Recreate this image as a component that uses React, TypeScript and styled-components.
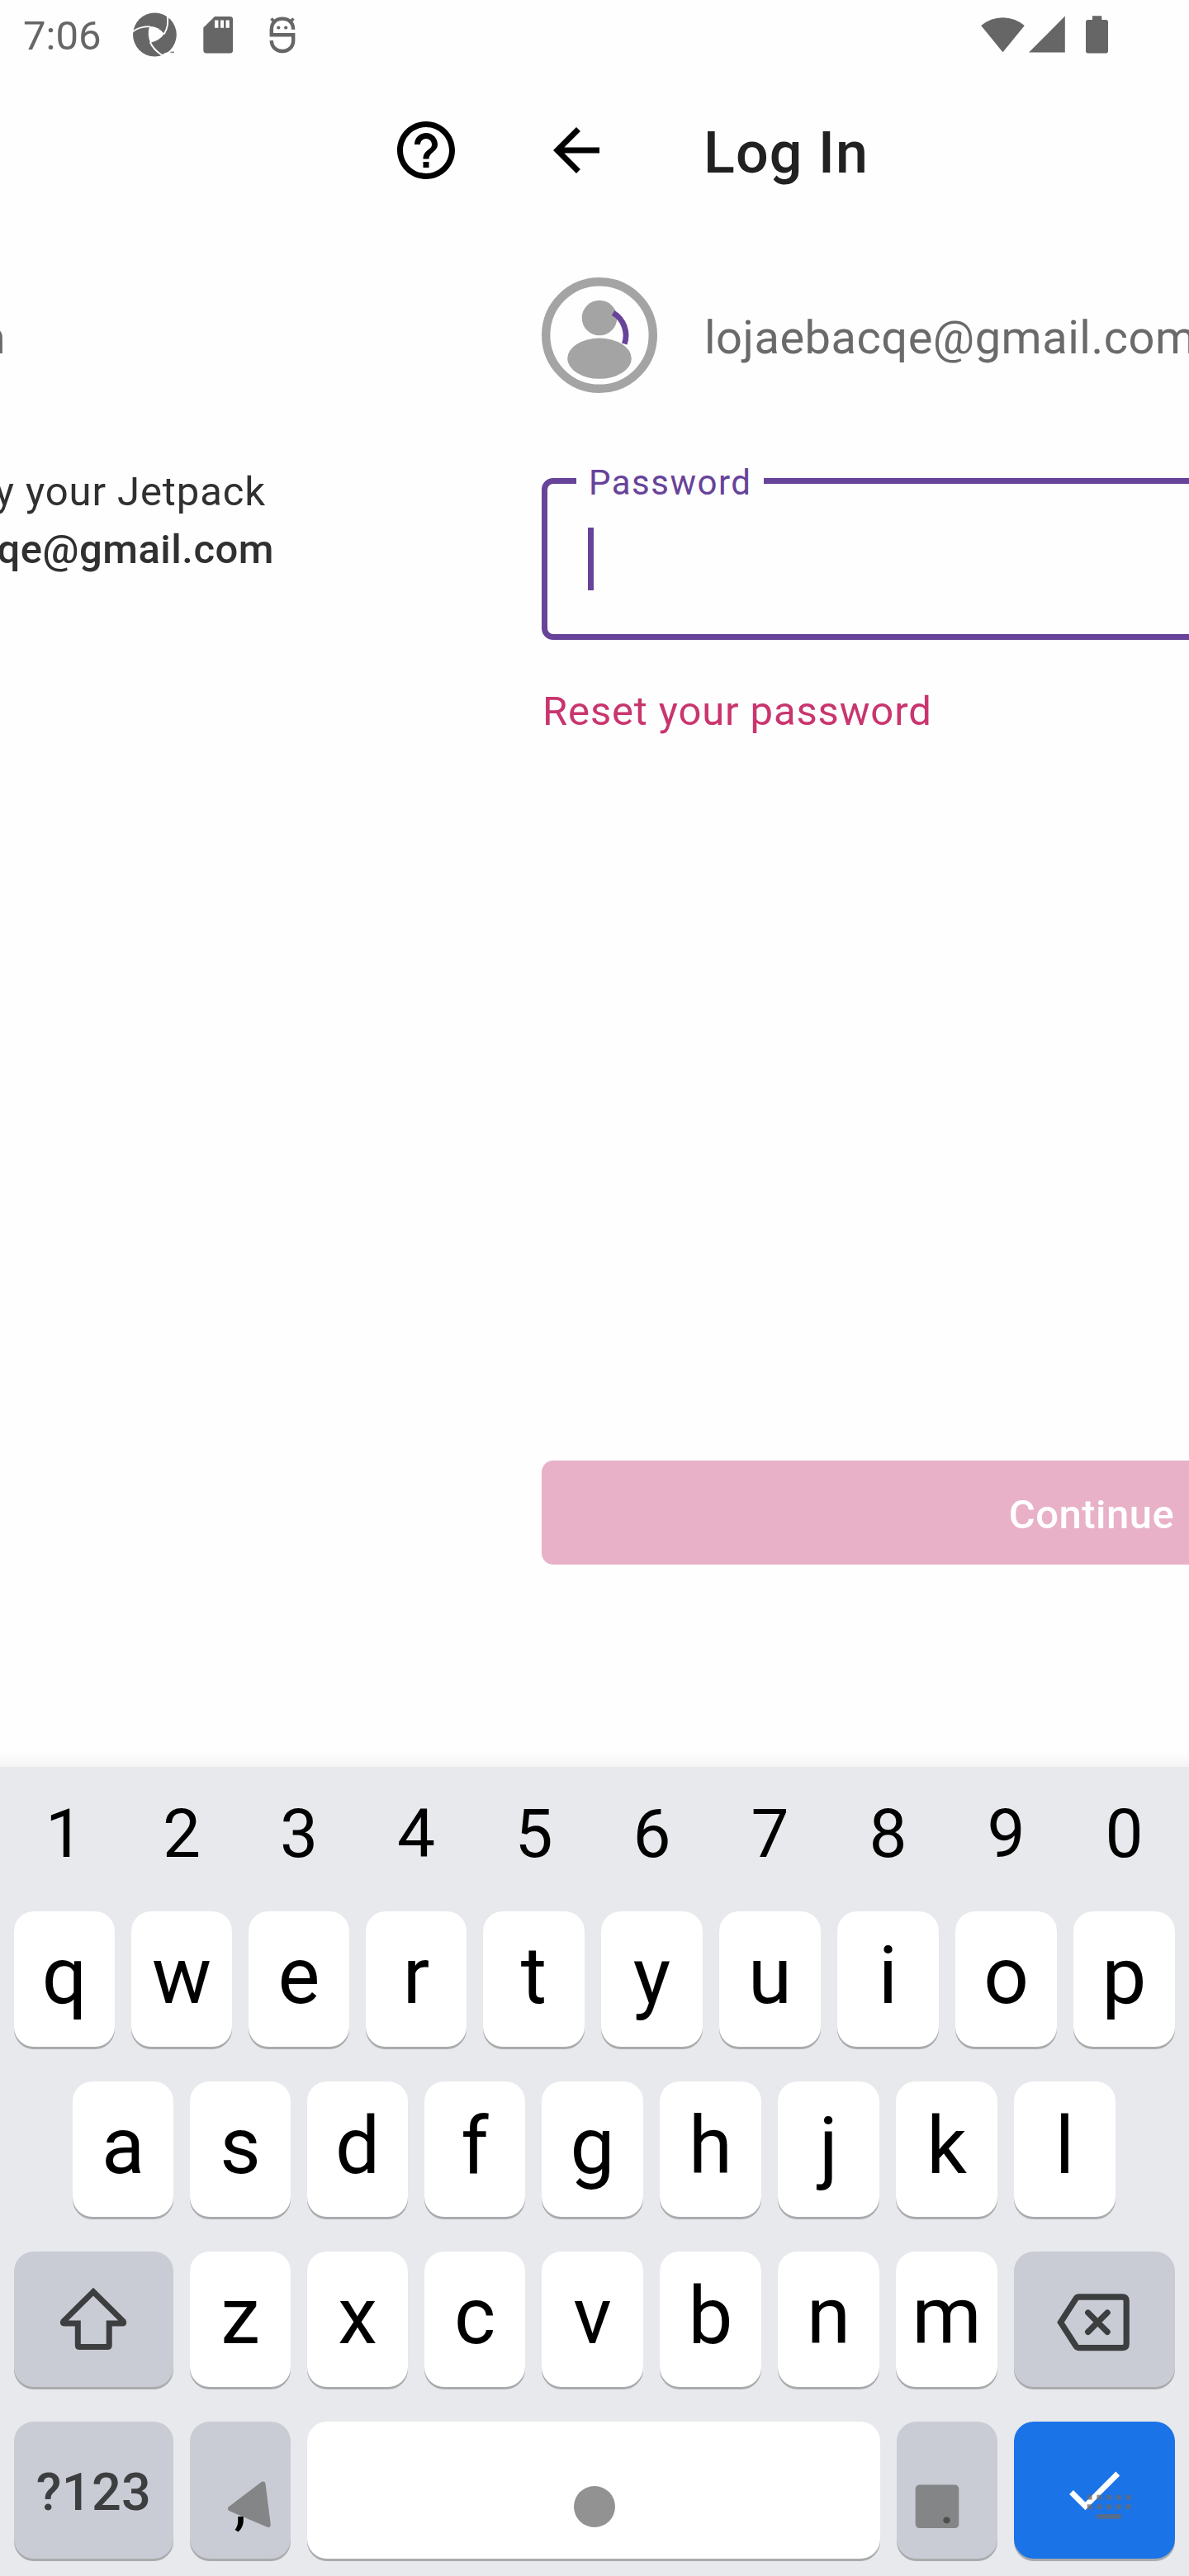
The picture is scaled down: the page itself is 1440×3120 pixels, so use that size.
import React from "react";
import styled, { createGlobalStyle, css } from "styled-components";

const GlobalStyle = createGlobalStyle`
  *, *::before, *::after { box-sizing: border-box; }
  body { margin: 0; background: #fefefe; font-family: Roboto, sans-serif; }
`;

const Screen = styled.div`
  position: relative;
  display: flex;
  flex-direction: column;
  width: 1440px;
  height: 3120px;
  overflow: hidden;
  background: #fefefe;
`;

/* ---------- status bar ---------- */

const StatusBar = styled.header`
  display: flex;
  align-items: center;
  justify-content: space-between;
  height: 84px;
  padding: 0 98px 0 28px;
  flex: none;
`;

const StatusGroup = styled.div`
  display: flex;
  align-items: center;
`;

const Clock = styled.span`
  width: 133px;
  padding-top: 4px;
  font-size: 49px;
  line-height: 84px;
  color: #666;
`;

const StatusIcon = styled.svg<{ $mr?: number }>`
  display: block;
  margin-right: ${(p) => p.$mr ?? 0}px;
`;

/* ---------- sliding panels ---------- */

const Panels = styled.main`
  display: flex;
  flex: none;
  height: 2056px;
  overflow: hidden;
`;

const OutgoingPanel = styled.section`
  width: 600px;
  flex: none;
  display: flex;
  flex-direction: column;
  overflow: hidden;
`;

const IncomingPanel = styled.section`
  width: 1440px;
  flex: none;
  display: flex;
  flex-direction: column;
`;

const Toolbar = styled.div<{ $end?: boolean }>`
  display: flex;
  align-items: center;
  height: 196px;
  flex: none;
  padding: 0 42px 0 56px;
  justify-content: ${(p) => (p.$end ? "flex-end" : "flex-start")};
`;

const Title = styled.h1`
  margin: 0 0 0 112px;
  padding-top: 6px;
  font-size: 70px;
  font-weight: 500;
  letter-spacing: 1.1px;
  line-height: 84px;
  color: #212121;
`;

const AccountRow = styled.div`
  display: flex;
  align-items: center;
  height: 140px;
  margin-top: 56px;
`;

const Email = styled.span`
  padding-top: 5px;
  font-size: 56px;
  line-height: 70px;
  letter-spacing: 0.5px;
  white-space: nowrap;
  color: #6a6a6a;
`;

const EmailTail = styled.div`
  display: flex;
  justify-content: flex-end;
  width: 7px;
  overflow: hidden;
`;

const MessageLine = styled.p<{ $width: number; $bold?: boolean }>`
  display: flex;
  justify-content: flex-end;
  width: ${(p) => p.$width}px;
  margin: 0;
  overflow: hidden;
  font-size: 49px;
  font-weight: ${(p) => (p.$bold ? 500 : 400)};
  line-height: 70px;
  letter-spacing: ${(p) => (p.$bold ? 0.5 : 0.9)}px;
  white-space: nowrap;
  color: #303030;
`;

const Message = styled.div`
  margin-top: 85px;
`;

const Content = styled.div`
  display: flex;
  flex-direction: column;
  flex: 1;
  padding: 0 56px;
`;

const IncomingAccount = styled(AccountRow)`
  gap: 57px;
`;

const Field = styled.div`
  position: relative;
  display: flex;
  align-items: flex-start;
  height: 196px;
  margin-top: 103px;
  padding: 53px 49px;
  border: 7px solid #674399;
  border-radius: 14px;
`;

const FieldLabel = styled.label`
  position: absolute;
  top: -28px;
  left: 35px;
  width: 227px;
  padding-left: 15px;
  background: #fefefe;
  font-size: 42px;
  line-height: 54px;
  letter-spacing: 1.5px;
  color: #674399;
`;

const Caret = styled.span`
  width: 7px;
  height: 76px;
  background: #674399;
`;

const ResetLink = styled.a`
  margin-top: 52px;
  padding-left: 1px;
  font-size: 49px;
  line-height: 70px;
  letter-spacing: 0.85px;
  color: #c9356e;
`;

const ContinueButton = styled.button`
  display: flex;
  justify-content: center;
  align-items: center;
  height: 126px;
  margin: auto 0 245px;
  padding: 5px 0 0 4px;
  border: 0;
  border-radius: 14px;
  background: #e8b1c8;
  color: #fff;
  font: 500 49px Roboto, sans-serif;
  letter-spacing: 0.5px;
`;

/* ---------- keyboard ---------- */

const Keyboard = styled.section`
  position: relative;
  display: flex;
  flex-direction: column;
  flex: 1;
  background: #e8e9ed;

  &::before {
    content: "";
    position: absolute;
    left: 0;
    right: 0;
    top: -18px;
    height: 18px;
    background: linear-gradient(rgba(0, 0, 0, 0), rgba(0, 0, 0, 0.04));
  }
`;

const KeyRow = styled.div<{ $cols: string; $left?: number; $height?: number; $bottom?: number }>`
  display: grid;
  grid-template-columns: ${(p) => p.$cols};
  column-gap: 20px;
  height: ${(p) => p.$height ?? 164}px;
  margin: 0 0 ${(p) => p.$bottom ?? 42}px ${(p) => p.$left ?? 17}px;
`;

const NumberKey = styled.span`
  display: flex;
  align-items: center;
  justify-content: center;
  font-size: 82px;
  line-height: 82px;
  color: #000;
`;

type Tone = "light" | "dim" | "accent";
const toneColor: Record<Tone, string> = { light: "#fff", dim: "#caccd5", accent: "#1b73e8" };

const Key = styled.div<{ $tone?: Tone; $kind?: "letter" | "label" | "punct" | "icon" }>`
  display: flex;
  align-items: center;
  justify-content: center;
  border-radius: 24px;
  background: ${(p) => toneColor[p.$tone ?? "light"]};
  box-shadow: 0 3px 0 #a9abad;
  color: #000;
  ${(p) =>
    (p.$kind ?? "letter") === "letter" &&
    css`
      padding-bottom: 8px;
      font-size: 96px;
      line-height: 96px;
    `}
  ${(p) =>
    p.$kind === "label" &&
    css`
      padding-top: 5px;
      font-size: 63px;
      font-weight: 500;
      letter-spacing: 0.4px;
      color: #3d3e40;
    `}
  ${(p) =>
    p.$kind === "punct" &&
    css`
      padding-top: 28px;
      font-size: 75px;
      line-height: 75px;
    `}
`;

const NavOverlay = styled.svg`
  position: absolute;
  left: 0;
  bottom: 0;
  fill: #6b6b6b;
  opacity: 0.73;
`;

const firstCols = "repeat(4, 122px) repeat(6, 123px)";
const homeCols = "repeat(4, 122px) repeat(5, 123px)";
const lowerCols = "193px repeat(3, 122px) repeat(4, 123px) 195px";
const bottomCols = "193px 122px 694px 122px 195px";

const dots = [0, 1, 2, 3, 4];

function StatusIcons() {
  return (
    <>
      <StatusGroup>
        <Clock>7:06</Clock>
        <StatusIcon $mr={32} width="53" height="54" viewBox="161 15.5 53 54">
          <circle cx="187.4" cy="42.5" r="26.4" fill="#666" />
          <path d="M181 32.6Q191 32 199 41.5Q193 50 182 52.2Q178 42 181 32.6Z" fill="#fefefe" />
          <g fill="none" stroke="#fefefe" strokeWidth="1.9">
            <path d="M159.5 39.8Q168 32.4 181.5 32.6" />
            <path d="M202.3 17Q205.3 31 198.8 41.8" />
            <path d="M181.8 51.5Q186 61 196.5 67.5" />
          </g>
          <path d="M194.5 68.5Q198 64.5 204 63.5L211 61.5V69H194Z" fill="#fefefe" />
          <path d="M206.5 63h4.5v1.7h-4.5z" fill="#888" />
        </StatusIcon>
        <StatusIcon $mr={44} width="36" height="46" viewBox="246 19 36 46">
          <path
            d="M260 20h18.5a3.7 3.7 0 0 1 3.7 3.7v37a3.7 3.7 0 0 1-3.7 3.7h-28.5a3.7 3.7 0 0 1-3.7-3.7V33.5Z"
            fill="#666"
          />
          <path d="M260 24.5h4.4v9.3h-4.4zM267 24.5h4v9.3h-4zM273.5 24.5h4.3v9.3h-4.3z" fill="#fefefe" />
        </StatusIcon>
        <StatusIcon width="32" height="46" viewBox="325.5 19 32 46" fill="none" stroke="#666" strokeWidth="4.4">
          <path d="M354.7 35.8C354.7 27.5 349 22.6 341.5 22.6S328.3 27.5 328.3 35.8V42.2H354.7V49C354.7 56.8 349 62 341.5 62S328.3 56.8 328.3 49" />
          <path d="M328 22.5l4 4M355 22.5l-4 4" strokeWidth="3.6" />
          <circle cx="336.8" cy="33.5" r="2.1" fill="#666" stroke="none" />
          <circle cx="345.7" cy="33.5" r="2.1" fill="#666" stroke="none" />
        </StatusIcon>
      </StatusGroup>
      <StatusGroup>
        <StatusIcon $mr={5} width="53" height="46" viewBox="1188 19 53 46" fill="#666">
          <path d="M1214.5 63.2L1188.2 31A40 40 0 0 1 1240.8 31Z" />
        </StatusIcon>
        <StatusIcon $mr={25} width="44" height="46" viewBox="1246 19 44 46" fill="#666">
          <path d="M1289.8 19.5V63.5H1246Z" />
        </StatusIcon>
        <StatusIcon width="27" height="46" viewBox="1315 19 27 46" fill="#666">
          <path d="M1323 19.3h11.3v4.7h5a2.7 2.7 0 0 1 2.7 2.7v35a2.7 2.7 0 0 1-2.7 2.7h-21.6a2.7 2.7 0 0 1-2.7-2.7v-35a2.7 2.7 0 0 1 2.7-2.7h5.3z" />
        </StatusIcon>
      </StatusGroup>
    </>
  );
}

function Avatar() {
  return (
    <svg width="140" height="140" viewBox="0 0 140 140">
      <circle cx="70" cy="70" r="64.8" fill="none" stroke="#a4a4a4" strokeWidth="10.4" />
      <circle cx="70" cy="49" r="21.3" fill="#a4a4a4" />
      <ellipse cx="70" cy="98.2" rx="38.8" ry="24.6" fill="#a4a4a4" />
      <path d="M86.6 42.8A32 32 0 0 1 100.3 80.5" fill="none" stroke="#674399" strokeWidth="6.8" />
    </svg>
  );
}

export default function App() {
  return (
    <>
      <GlobalStyle />
      <Screen>
        <StatusBar>
          <StatusIcons />
        </StatusBar>

        <Panels>
          <OutgoingPanel>
            <Toolbar $end>
              <svg width="84" height="84" viewBox="0 0 24 24">
                <path d="M11 18h2v-2h-2v2zm1-16C6.48 2 2 6.48 2 12s4.48 10 10 10 10-4.48 10-10S17.52 2 12 2zm0 18c-4.41 0-8-3.59-8-8s3.59-8 8-8 8 3.59 8 8-3.59 8-8 8zm0-14c-2.21 0-4 1.79-4 4h2c0-1.1.9-2 2-2s2 .9 2 2c0 2-3 1.75-3 5h2c0-2.25 3-2.5 3-5 0-2.21-1.79-4-4-4z" />
              </svg>
            </Toolbar>
            <AccountRow>
              <EmailTail>
                <Email>m</Email>
              </EmailTail>
            </AccountRow>
            <Message>
              <MessageLine $width={322}>y your Jetpack</MessageLine>
              <MessageLine $width={332} $bold>
                qe@gmail.com
              </MessageLine>
            </Message>
          </OutgoingPanel>

          <IncomingPanel>
            <Toolbar>
              <svg width="84" height="84" viewBox="0 0 24 24">
                <path d="M20 11H7.83l5.59-5.59L12 4l-8 8 8 8 1.41-1.41L7.83 13H20v-2z" />
              </svg>
              <Title>Log In</Title>
            </Toolbar>
            <Content>
              <IncomingAccount>
                <Avatar />
                <Email>lojaebacqe@gmail.com</Email>
              </IncomingAccount>
              <Field>
                <FieldLabel>Password</FieldLabel>
                <Caret />
              </Field>
              <ResetLink>Reset your password</ResetLink>
              <ContinueButton>Continue</ContinueButton>
            </Content>
          </IncomingPanel>
        </Panels>

        <Keyboard>
          <KeyRow $cols={firstCols} $height={162} $bottom={13}>
            {"1234567890".split("").map((n) => (
              <NumberKey key={n}>{n}</NumberKey>
            ))}
          </KeyRow>
          <KeyRow $cols={firstCols}>
            {"qwertyuiop".split("").map((c) => (
              <Key key={c}>{c}</Key>
            ))}
          </KeyRow>
          <KeyRow $cols={homeCols} $left={88}>
            {"asdfghjkl".split("").map((c) => (
              <Key key={c}>{c}</Key>
            ))}
          </KeyRow>
          <KeyRow $cols={lowerCols}>
            <Key $tone="dim" $kind="icon">
              <svg width="193" height="164" viewBox="17 2727 193 164" fill="none" stroke="#3d3e3f" strokeWidth="7">
                <path d="M113 2775.7L76.8 2811.5Q75.5 2814 78 2814H94.3V2840.5Q94.3 2842.5 96.5 2842.5H130Q132.2 2842.5 132.2 2840.5V2814H148.5Q150.5 2814 149.2 2811.5Z" />
              </svg>
            </Key>
            {"zxcvbnm".split("").map((c) => (
              <Key key={c}>{c}</Key>
            ))}
            <Key $tone="dim" $kind="icon">
              <svg width="195" height="164" viewBox="1228 2727 195 164" fill="none" stroke="#3d3e3f" strokeWidth="7.3">
                <path d="M1284.5 2812.7L1303 2784Q1304.5 2782 1307 2782H1359Q1364.2 2782 1364.2 2787V2838.7Q1364.2 2843.7 1359 2843.7H1307Q1304.5 2843.7 1303 2841.5Z" />
                <path d="M1317.7 2801l23.4 23.4M1341.1 2801l-23.4 23.4" strokeLinecap="round" />
              </svg>
            </Key>
          </KeyRow>
          <KeyRow $cols={bottomCols} $height={166} $bottom={0}>
            <Key $tone="dim" $kind="label">
              ?123
            </Key>
            <Key $tone="dim" $kind="punct">
              ,
            </Key>
            <Key />
            <Key $tone="dim" $kind="punct">
              .
            </Key>
            <Key $tone="accent" $kind="icon">
              <svg width="195" height="166" viewBox="1228 2933 195 166" fill="none" stroke="#fff" strokeWidth="6.8">
                <path d="M1297.5 3018.5L1314.4 3035.4L1353.8 2996" />
              </svg>
            </Key>
          </KeyRow>

          <NavOverlay width="1440" height="130" viewBox="0 2990 1440 130">
            <path
              d="M318.5 3008.5L279 3038.5L324.8 3058Z"
              stroke="#6b6b6b"
              strokeWidth="6"
              strokeLinejoin="round"
            />
            <circle cx="720" cy="3036" r="25" />
            <rect x="1108.7" y="3009.5" width="52.6" height="52.6" rx="5" />
            {dots.map((i) => (
              <React.Fragment key={i}>
                <rect x={1316.7 + i * 11.7} y="3021.7" width="5.9" height="5.9" />
                <rect x={1316.7 + i * 11.7} y="3033.2" width="5.9" height="5.9" />
              </React.Fragment>
            ))}
            <rect x="1328.4" y="3045" width="29.3" height="5.8" />
          </NavOverlay>
        </Keyboard>
      </Screen>
    </>
  );
}
